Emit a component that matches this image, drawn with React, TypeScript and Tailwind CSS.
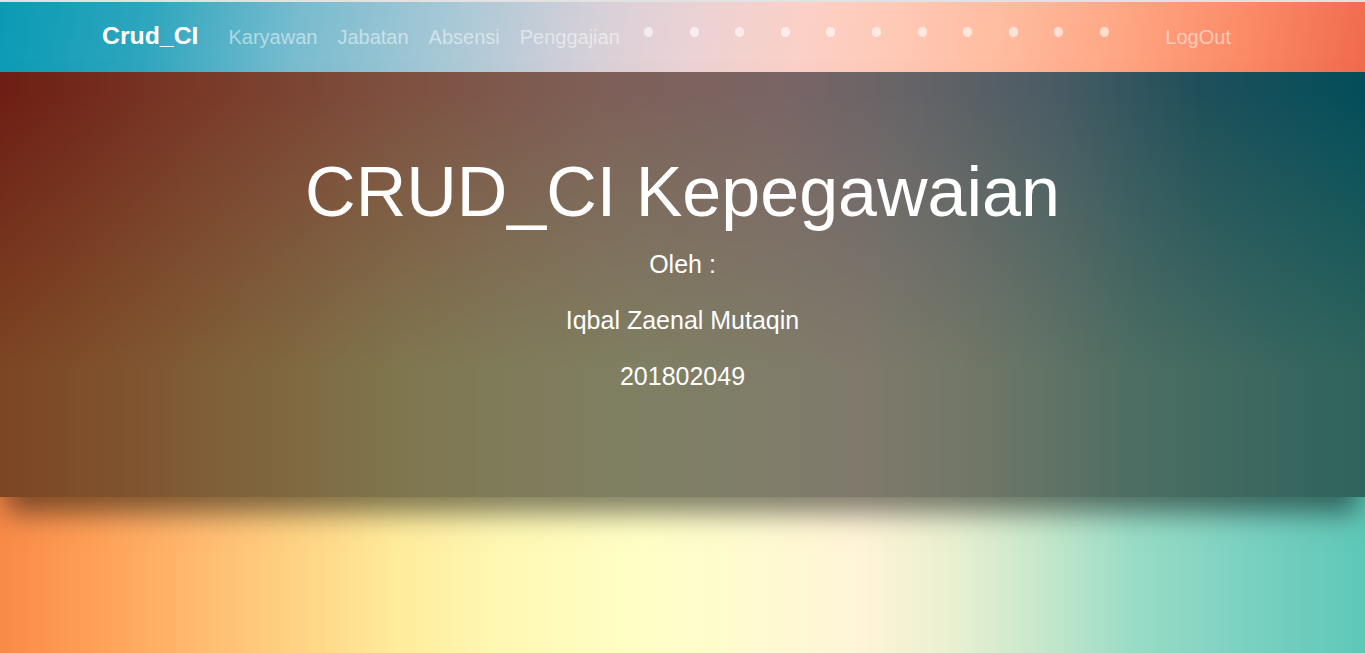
import React from "react";

const dots = Array.from({ length: 11 });

export default function App() {
  return (
    <div className="min-h-screen w-full overflow-hidden font-['Liberation_Sans',Arial,sans-serif] bg-[linear-gradient(to_right,#f98a48_0%,#ffa058_7%,#ffbc70_15%,#ffd484_22%,#ffec9c_29%,#fff8b4_37%,#ffffc6_47%,#fffbd0_55%,#fff4d8_63%,#e8f0d0_70%,#c8e8cc_76%,#9adcc6_83%,#78d0c0_92%,#5ec8b8_100%)]">
      <nav className="h-[72px] border-t-2 border-[#e2e2e2] flex items-center pl-[102px] bg-[linear-gradient(100deg,#0a9ab4_0%,#2ea6be_11%,#78bccf_22%,#a8c8d6_33%,#d8d0d8_44%,#ecd2d4_51%,#fcd0c6_59%,#ffc8b4_66%,#ffbca0_73%,#ffa886_81%,#fb8a66_91%,#f06a4c_100%)]">
        <a className="text-[24.8px] font-bold text-white leading-none pb-[1px]">Crud_CI</a>
        <ul className="flex items-center ml-[30px] gap-[20px] text-[20px] text-white/50 leading-none">
          <li>Karyawan</li>
          <li>Jabatan</li>
          <li>Absensi</li>
          <li>Penggajian</li>
        </ul>
        <div className="flex items-center ml-[6px] -mt-[10px]">
          {dots.map((_, i) => (
            <div key={i} className="w-[45.6px] flex justify-center">
              <span className="block w-[9px] h-[10px] rounded-full bg-white/60" />
            </div>
          ))}
        </div>
        <a className="ml-[38px] text-[20px] text-white/50 leading-none">LogOut</a>
      </nav>

      <section className="grid shadow-[0_22px_26px_-6px_rgba(0,0,0,0.5)]">
        <div className="[grid-area:1/1] bg-[linear-gradient(to_right,#dc3c28_0%,#f47450_15%,#fca080_29%,#fcc0b0_44%,#f4c8c8_57%,#d0c8d0_66%,#94b8c8_77%,#3ca0b4_88%,#069cb4_100%)] [mask-image:linear-gradient(to_bottom,black_0%,black_5%,transparent_70%)]" />
        <div className="[grid-area:1/1] relative h-[425px] bg-black/50 text-white text-center pt-[81px]">
          <h1 className="text-[70px] leading-[78px] mb-[5px]">CRUD_CI Kepegawaian</h1>
          <p className="text-[25px] leading-[56px]">Oleh :</p>
          <p className="text-[25px] leading-[56px]">Iqbal Zaenal Mutaqin</p>
          <p className="text-[25px] leading-[56px]">201802049</p>
        </div>
      </section>
    </div>
  );
}
